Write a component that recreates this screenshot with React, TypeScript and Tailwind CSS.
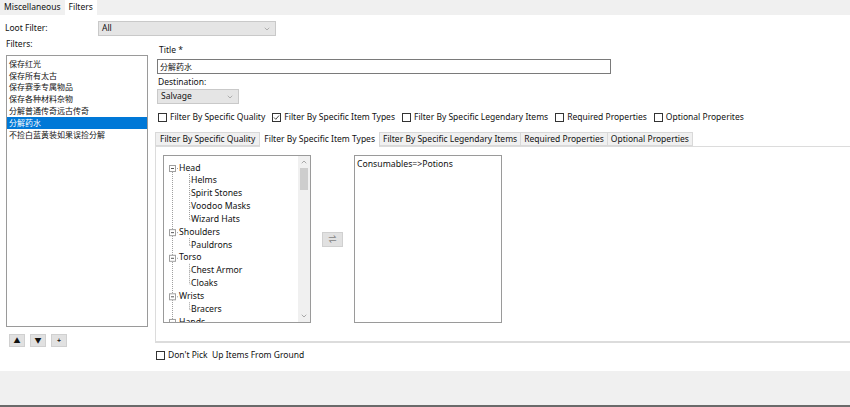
import { ChevronDown, ChevronUp } from 'lucide-react'

const font = { fontFamily: '"Noto Sans", "Noto Sans CJK SC", sans-serif' }

const filters = [
  '保存红光',
  '保存所有太古',
  '保存赛季专属物品',
  '保存各种材料杂物',
  '分解普通传奇远古传奇',
  '分解药水',
  '不捡白蓝黄装如果误捡分解',
]

const tree: { label: string; depth: number }[] = [
  { label: 'Head', depth: 0 },
  { label: 'Helms', depth: 1 },
  { label: 'Spirit Stones', depth: 1 },
  { label: 'Voodoo Masks', depth: 1 },
  { label: 'Wizard Hats', depth: 1 },
  { label: 'Shoulders', depth: 0 },
  { label: 'Pauldrons', depth: 1 },
  { label: 'Torso', depth: 0 },
  { label: 'Chest Armor', depth: 1 },
  { label: 'Cloaks', depth: 1 },
  { label: 'Wrists', depth: 0 },
  { label: 'Bracers', depth: 1 },
  { label: 'Hands', depth: 0 },
]

const ROW = 12.83

function Check({ label, checked }: { label: string; checked?: boolean }) {
  return (
    <div className="flex items-center gap-[3px]">
      <span className="flex h-[9px] w-[9px] items-center justify-center border border-[#333] bg-white">
        {checked && (
          <svg width="7" height="7" viewBox="0 0 7 7">
            <path d="M1 3.5 L2.8 5.3 L6 1.5" fill="none" stroke="#333" strokeWidth="0.9" />
          </svg>
        )}
      </span>
      <span className="whitespace-pre">{label}</span>
    </div>
  )
}

function Select({ value, className }: { value: string; className: string }) {
  return (
    <div
      className={`flex h-[15px] items-center justify-between border border-[#c9c9c9] bg-[#e5e5e5] pl-[3px] pr-[4px] ${className}`}
    >
      <span>{value}</span>
      <ChevronDown size={8} strokeWidth={1.5} className="text-[#777]" />
    </div>
  )
}

function TreeLines() {
  const y = (i: number) => 12 + ROW * i
  const tops = tree.map((t, i) => (t.depth === 0 ? i : -1)).filter((i) => i >= 0)
  const lines: JSX.Element[] = []
  lines.push(<line key="v0" x1="8.5" y1={y(0)} x2="8.5" y2={y(12)} />)
  tops.forEach((i) => {
    lines.push(<line key={`h${i}`} x1="11" y1={y(i) + 0.5} x2="14" y2={y(i) + 0.5} />)
  })
  tops.forEach((p, k) => {
    const next = k + 1 < tops.length ? tops[k + 1] : tree.length
    if (next - p > 1) {
      lines.push(
        <line key={`c${p}`} x1="25.5" y1={y(p) + 6} x2="25.5" y2={y(next - 1)} />
      )
      for (let c = p + 1; c < next; c++) {
        lines.push(<line key={`t${c}`} x1="25.5" y1={y(c) + 0.5} x2="28" y2={y(c) + 0.5} />)
      }
    }
  })
  return (
    <svg className="absolute left-0 top-0" width="134" height="170">
      <g stroke="#a0a0a0" strokeWidth="1" strokeDasharray="1 1">
        {lines}
      </g>
      {tops.map((i) => (
        <g key={`b${i}`}>
          <rect x="5.5" y={y(i) - 2.5} width="6" height="6" fill="white" stroke="#a0a0a0" />
          <line x1="7" y1={y(i) + 0.5} x2="10" y2={y(i) + 0.5} stroke="#555" />
        </g>
      ))}
    </svg>
  )
}

export default function App() {
  return (
    <div
      className="flex h-[407px] w-[850px] flex-col overflow-hidden bg-white text-[8.5px] leading-none text-[#111]"
      style={font}
    >
      {/* top tab strip */}
      <div className="flex h-[15px] shrink-0 items-stretch bg-[#f0f0f0]">
        <div className="flex items-center pl-[4px] pr-[4px]">Miscellaneous</div>
        <div className="flex items-center bg-white px-[4px]">Filters</div>
      </div>

      <div className="relative flex flex-1 flex-col">
        <div className="flex h-[21px] items-end">
          <span className="mb-[4px] w-[98px] pl-[5px]">Loot Filter:</span>
          <Select value="All" className="w-[178px]" />
        </div>

        <div className="flex flex-1">
          {/* left column */}
          <div className="flex w-[155px] shrink-0 flex-col pl-[6px]">
            <div className="mt-[4px] h-[15px]">Filters:</div>
            <div className="h-[272px] w-[142px] border border-[#9a9a9a] pt-[2px]">
              {filters.map((f, i) => (
                <div
                  key={f}
                  className={`flex h-[11.8px] items-center px-[2px] text-[8px] ${
                    i === 5 ? 'bg-[#0078d7] text-white' : ''
                  }`}
                >
                  {f}
                </div>
              ))}
            </div>
            <div className="mt-[7px] flex gap-[5px] pl-[3px]">
              {['▲', '▼', '+'].map((s) => (
                <div
                  key={s}
                  className="flex h-[13px] w-[16px] items-center justify-center border border-[#d0d0d0] bg-[#e1e1e1] text-[7px] font-bold"
                >
                  {s}
                </div>
              ))}
            </div>
          </div>

          {/* right column */}
          <div className="flex flex-1 flex-col">
            <div className="mt-[10px] h-[13px] pl-[4px]">Title *</div>
            <div className="ml-[2px] flex h-[15px] w-[454px] items-center border border-[#7a7a7a] pl-[2px] text-[8px]">
              分解药水
            </div>
            <div className="mt-[4px] h-[11px] pl-[3px]">Destination:</div>
            <Select value="Salvage" className="ml-[2px] w-[82px]" />
            <div className="mt-[8px] flex h-[10px] items-center gap-[7px] pl-[3px]">
              <Check label="Filter By Specific Quality" />
              <Check label="Filter By Specific Item Types" checked />
              <Check label="Filter By Specific Legendary Items" />
              <Check label="Required Properties" />
              <Check label="Optional Properites" />
            </div>

            {/* tabs */}
            <div className="relative z-10 mt-[10px] flex h-[14px] items-end">
              <div className="flex h-[14px] items-center border border-[#d9d9d9] bg-[#f0f0f0] px-[4px]">
                Filter By Specific Quality
              </div>
              <div className="-mb-px flex h-[16px] items-center bg-white px-[4px]">
                Filter By Specific Item Types
              </div>
              <div className="flex h-[14px] items-center border border-[#d9d9d9] bg-[#f0f0f0] px-[3px]">
                Filter By Specific Legendary Items
              </div>
              <div className="flex h-[14px] items-center border border-l-0 border-[#d9d9d9] bg-[#f0f0f0] px-[3px]">
                Required Properties
              </div>
              <div className="flex h-[14px] items-center border border-l-0 border-[#d9d9d9] bg-[#f0f0f0] px-[3px]">
                Optional Properties
              </div>
            </div>
            <div className="flex h-[197px] items-start border-b-2 border-l border-t border-[#dcdcdc] pl-[7px] pt-[8px]">
              {/* tree */}
              <div className="relative h-[168px] w-[148px] overflow-hidden border border-[#9a9a9a] bg-white text-[8.7px]">
                <TreeLines />
                <div className="relative">
                  {tree.map((t, i) => (
                    <div
                      key={i}
                      className={`flex h-[12.83px] items-center ${i === 0 ? 'mt-[5.5px]' : ''} ${
                        t.depth === 0 ? 'pl-[15px]' : 'pl-[27px]'
                      }`}
                    >
                      {t.label}
                    </div>
                  ))}
                </div>
                <div className="absolute right-0 top-0 flex h-full w-[12px] flex-col items-center bg-[#f0f0f0]">
                  <ChevronUp size={8} strokeWidth={1.5} className="mt-[2px] text-[#606060]" />
                  <div className="mt-[2px] h-[22px] w-[8px] bg-[#cdcdcd]" />
                  <div className="flex-1" />
                  <ChevronDown size={8} strokeWidth={1.5} className="mb-[2px] text-[#606060]" />
                </div>
              </div>
              <div className="flex h-[168px] w-[43px] items-center justify-center">
                <div className="flex h-[15px] w-[21px] items-center justify-center border border-[#d0d0d0] bg-[#e1e1e1] text-[8px] text-[#555]">
                  ⇌
                </div>
              </div>
              <div className="h-[168px] w-[148px] border border-[#9a9a9a] bg-white pl-[2px] pt-[4px] text-[8.7px]">
                Consumables=&gt;Potions
              </div>
            </div>
            <div className="mt-[8px] pl-[1px]">
              <Check label="Don't Pick  Up Items From Ground" />
            </div>
          </div>
        </div>
      </div>

      <div className="h-[34px] shrink-0 bg-[#f0f0f0]" />
      <div className="h-[2px] shrink-0 bg-[#6a6a6a]" />
    </div>
  )
}
